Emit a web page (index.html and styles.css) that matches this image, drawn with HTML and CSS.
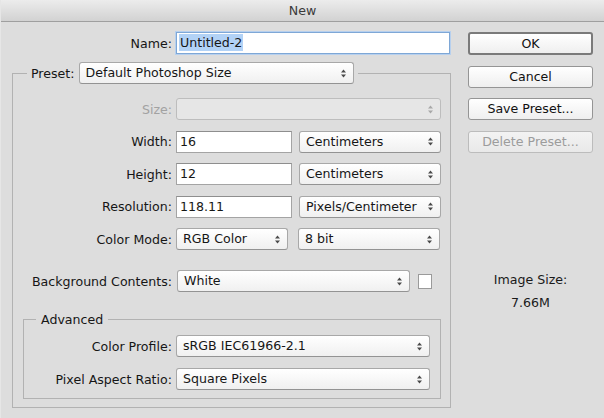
FILE: index.html
```html
<!DOCTYPE html>
<html>
<head>
<meta charset="utf-8">
<link rel="stylesheet" href="styles.css">
</head>
<body>
<div class="window">
  <div class="titlebar">New</div>
  <div class="main">
    <div class="form">
      <div class="row name-row">
        <span class="lbl lbl-name">Name:</span>
        <div class="field focus w-name"><span class="selected">Untitled-2</span></div>
      </div>
      <fieldset class="group preset">
        <legend class="legend-preset">
          <div class="legend-inner">
            <span class="lbl-inline">Preset:</span>
            <div class="select w-preset"><span>Default Photoshop Size</span><svg class="arr" width="5" height="9" viewBox="0 0 5 9"><path d="M0 3.6 L2.5 0.6 L5 3.6Z M0 5.4 L2.5 8.4 L5 5.4Z"/></svg></div>
          </div>
        </legend>
        <div class="rows">
          <div class="row">
            <span class="lbl lbl-outer disabled">Size:</span>
            <div class="select disabled w-size"><span></span><svg class="arr" width="5" height="9" viewBox="0 0 5 9"><path d="M0 3.6 L2.5 0.6 L5 3.6Z M0 5.4 L2.5 8.4 L5 5.4Z"/></svg></div>
          </div>
          <div class="row">
            <span class="lbl lbl-outer">Width:</span>
            <div class="field w-num">16</div>
            <div class="select w-unit"><span>Centimeters</span><svg class="arr" width="5" height="9" viewBox="0 0 5 9"><path d="M0 3.6 L2.5 0.6 L5 3.6Z M0 5.4 L2.5 8.4 L5 5.4Z"/></svg></div>
          </div>
          <div class="row">
            <span class="lbl lbl-outer">Height:</span>
            <div class="field w-num">12</div>
            <div class="select w-unit"><span>Centimeters</span><svg class="arr" width="5" height="9" viewBox="0 0 5 9"><path d="M0 3.6 L2.5 0.6 L5 3.6Z M0 5.4 L2.5 8.4 L5 5.4Z"/></svg></div>
          </div>
          <div class="row">
            <span class="lbl lbl-outer">Resolution:</span>
            <div class="field w-num">118.11</div>
            <div class="select w-unit"><span>Pixels/Centimeter</span><svg class="arr" width="5" height="9" viewBox="0 0 5 9"><path d="M0 3.6 L2.5 0.6 L5 3.6Z M0 5.4 L2.5 8.4 L5 5.4Z"/></svg></div>
          </div>
          <div class="row">
            <span class="lbl lbl-outer">Color Mode:</span>
            <div class="select w-mode"><span>RGB Color</span><svg class="arr" width="5" height="9" viewBox="0 0 5 9"><path d="M0 3.6 L2.5 0.6 L5 3.6Z M0 5.4 L2.5 8.4 L5 5.4Z"/></svg></div>
            <div class="select w-bits"><span>8 bit</span><svg class="arr" width="5" height="9" viewBox="0 0 5 9"><path d="M0 3.6 L2.5 0.6 L5 3.6Z M0 5.4 L2.5 8.4 L5 5.4Z"/></svg></div>
          </div>
        </div>
        <div class="row bg-row">
          <span class="lbl lbl-outer">Background Contents:</span>
          <div class="select w-bg"><span>White</span><svg class="arr" width="5" height="9" viewBox="0 0 5 9"><path d="M0 3.6 L2.5 0.6 L5 3.6Z M0 5.4 L2.5 8.4 L5 5.4Z"/></svg></div>
          <div class="swatch"></div>
        </div>
        <fieldset class="group advanced">
          <legend class="legend-adv">Advanced</legend>
          <div class="rows adv-rows">
            <div class="row">
              <span class="lbl lbl-inner">Color Profile:</span>
              <div class="select w-adv"><span>sRGB IEC61966-2.1</span><svg class="arr" width="5" height="9" viewBox="0 0 5 9"><path d="M0 3.6 L2.5 0.6 L5 3.6Z M0 5.4 L2.5 8.4 L5 5.4Z"/></svg></div>
            </div>
            <div class="row">
              <span class="lbl lbl-inner">Pixel Aspect Ratio:</span>
              <div class="select w-adv"><span>Square Pixels</span><svg class="arr" width="5" height="9" viewBox="0 0 5 9"><path d="M0 3.6 L2.5 0.6 L5 3.6Z M0 5.4 L2.5 8.4 L5 5.4Z"/></svg></div>
            </div>
          </div>
        </fieldset>
      </fieldset>
    </div>
    <div class="side">
      <div class="buttons">
        <div class="btn default">OK</div>
        <div class="btn">Cancel</div>
        <div class="btn">Save Preset...</div>
        <div class="btn disabled">Delete Preset...</div>
      </div>
      <div class="imgsize">
        <div>Image Size:</div>
        <div class="imgsize-val">7.66M</div>
      </div>
    </div>
  </div>
</div>
</body>
</html>
```

FILE: styles.css
```css
* { box-sizing: border-box; }

html, body {
  margin: 0;
  padding: 0;
}

body {
  width: 604px;
  height: 418px;
  overflow: hidden;
  background: #dddddd;
  font-family: "DejaVu Sans", "Liberation Sans", sans-serif;
  font-size: 12.6px;
  color: #161616;
}

.window {
  width: 604px;
  height: 418px;
  display: flex;
  flex-direction: column;
  background: #dddddd;
  border-left: 1px solid #e6e6e6;
}

.titlebar {
  height: 22px;
  flex: none;
  border-bottom: 1px solid #9f9f9f;
  background: linear-gradient(#ececec, #d2d2d2);
  text-align: center;
  line-height: 21px;
  font-size: 12.6px;
  color: #3a3a3a;
}

.main {
  display: flex;
  padding-top: 10px;
}

.form {
  width: 451px;
  flex: none;
  margin-left: -1px;
}

.row {
  display: flex;
  align-items: center;
  gap: 7px;
  height: 22px;
}

.lbl {
  text-align: right;
  margin-right: -3px;
  white-space: nowrap;
}

.lbl-name { width: 172px; }
.lbl-outer { width: 159px; }
.lbl-inner { width: 148px; }

.disabled { color: #a2a2a2; }

.field {
  height: 22px;
  background: #ffffff;
  border: 1px solid #a4a4a4;
  border-top-color: #8e8e8e;
  padding-left: 3px;
  line-height: 20px;
  white-space: nowrap;
}

.field.focus {
  border-color: #7ea7d6;
  box-shadow: 0 0 0 1px #b7d0ee;
  padding-left: 2px;
}

.selected {
  background: #b2d2f6;
  padding: 1px 1px;
}

.w-name { width: 274px; }
.w-num { width: 116px; }

.select {
  height: 22px;
  display: flex;
  align-items: center;
  justify-content: space-between;
  padding: 0 7px 0 6px;
  background: linear-gradient(#ffffff, #f0f0f0);
  border: 1px solid #a8a8a8;
  border-bottom-color: #939393;
  border-radius: 3px;
  white-space: nowrap;
  line-height: 20px;
}

.select .arr { fill: #4a4a4a; flex: none; }

.select.disabled {
  background: #e6e6e6;
  border-color: #bdbdbd;
}

.select.disabled .arr { fill: #a8a8a8; }

.w-preset { width: 275px; }
.w-size { width: 265px; }
.w-unit { width: 142px; }
.w-mode { width: 112px; }
.w-bits { width: 142px; margin-left: 3px; }
.w-bg { width: 233px; }
.w-adv { width: 254px; }

.group {
  margin: 0;
  border: 1px solid #b2b2b2;
  min-width: 0;
}

.preset {
  margin: 8px 0 0 12px;
  padding: 14px 0 8px 0;
}

.legend-preset {
  padding: 0 4px;
  margin-left: 14px;
}

.legend-inner {
  display: flex;
  align-items: center;
  gap: 4px;
}

.rows {
  display: flex;
  flex-direction: column;
  gap: 10.5px;
}

.bg-row {
  margin-top: 20px;
  gap: 8px;
}

.swatch {
  width: 14px;
  height: 15px;
  background: #ffffff;
  border: 1px solid #9a9a9a;
}

.advanced {
  margin: 19.5px 9px 0 10px;
  padding: 8.5px 0 8px 0;
}

.legend-adv {
  padding: 0 5px;
  margin-left: 12px;
  line-height: 15px;
}

.adv-rows { gap: 11px; }

.side {
  margin-left: 17px;
  width: 125px;
  display: flex;
  flex-direction: column;
}

.buttons {
  display: flex;
  flex-direction: column;
  gap: 10.5px;
}

.btn {
  height: 22px;
  border: 1px solid #959595;
  border-radius: 3px;
  background: linear-gradient(#ffffff, #efefef);
  text-align: center;
  line-height: 20px;
  color: #111111;
}

.btn.default {
  height: 23px;
  border: 2px solid #7a7a7a;
  line-height: 19px;
}

.btn.disabled {
  border-color: #bcbcbc;
  background: linear-gradient(#f3f3f3, #e9e9e9);
  color: #9c9c9c;
}

.imgsize {
  margin-top: 115px;
  text-align: center;
  line-height: 23px;
  color: #1a1a1a;
}
```
